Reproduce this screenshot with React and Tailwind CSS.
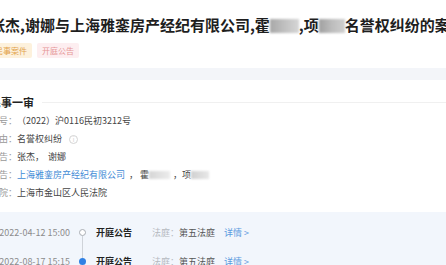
export default function App() {
  const rows = [
    { label: "案号：", value: <span className="text-[#444]">（2022）沪0116民初3212号</span> },
    {
      label: "案由：",
      value: (
        <span className="flex items-center text-[#444]">
          名誉权纠纷
          <span className="ml-[7px] w-[9px] h-[9px] rounded-full border border-[#d4d4d4] text-[#d0d0d0] text-[6px] leading-[7px] flex items-center justify-center">i</span>
        </span>
      ),
    },
    {
      label: "原告：",
      value: (
        <span className="text-[#444]">
          张杰，<span className="ml-[4px]">谢娜</span>
        </span>
      ),
    },
    {
      label: "被告：",
      value: (
        <span className="flex items-center text-[#444]">
          <span className="text-[#3f8bd6]">上海雅銮房产经纪有限公司</span>
          <span className="ml-[4px]">，</span>
          <span className="ml-[2px]">霍</span>
          <span className="w-[21px] h-[8px] bg-linear-to-r from-[#d6d6d6] to-[#ececec] blur-[1px]"></span>
          <span className="ml-[3px]">，</span>
          <span>项</span>
          <span className="w-[18px] h-[8px] bg-linear-to-r from-[#d0d0d0] to-[#e8e8e8] blur-[1px]"></span>
        </span>
      ),
    },
    { label: "法院：", value: <span className="text-[#444]">上海市金山区人民法院</span> },
  ];

  const events = [
    { date: "2022-04-12 15:00", active: false, first: true },
    { date: "2022-08-17 15:15", active: true, first: false },
  ];

  return (
    <div className="w-[446px] h-[265px] overflow-hidden bg-white font-['Noto_Sans_CJK_SC',sans-serif]">
      <div className="-ml-[10px] w-[470px]">
        <header className="pt-[15px] pb-[10px]">
          <h1 className="text-[15px] leading-[20px] font-bold text-[#1e1e1e] whitespace-nowrap">
            张杰,谢娜与上海雅銮房产经纪有限公司,霍
            <span className="inline-block align-[-2px] w-[29px] h-[14px] bg-linear-to-r from-[#a8a8a8] via-[#c0c0c0] to-[#d6d6d6] blur-[1px]"></span>
            ,项
            <span className="inline-block align-[-2px] w-[26px] h-[14px] bg-linear-to-r from-[#a0a0a0] via-[#bdbdbd] to-[#cfcfcf] blur-[1px]"></span>
            名誉权纠纷的案件
          </h1>
          <div className="mt-[8px] flex gap-[5px]">
            <span className="h-[15px] px-[5px] text-[8px] leading-[15px] rounded-[2px] bg-[#fdf1dc] text-[#e2a24a]">民事案件</span>
            <span className="h-[15px] px-[5px] text-[8px] leading-[15px] rounded-[2px] bg-[#fdeef0] text-[#e59595]">开庭公告</span>
          </div>
        </header>

        <div className="h-[12px] bg-[#f3f5f9]"></div>

        <section className="pt-[14px]">
          <div className="flex items-center">
            <h2 className="text-[11px] leading-[16px] font-bold text-[#222]">民事一审</h2>
            <div className="ml-[8px] flex-1 h-px bg-[#f0f0f0]"></div>
          </div>

          <div className="mt-[2px]">
            {rows.map((r) => (
              <div key={r.label} className="flex items-center text-[9px] leading-[18px] h-[18px]">
                <span className="w-[27px] text-[#999]">{r.label}</span>
                {r.value}
              </div>
            ))}
          </div>

          <div className="mt-[10px] bg-[#f2f6fc] pt-[6px] pb-[10px]">
            {events.map((e) => (
              <div key={e.date} className="flex items-center h-[29px] text-[9px] leading-[14px]">
                <span className="w-[80px] text-right text-[#8c8c8c] whitespace-nowrap">{e.date}</span>
                <div className="ml-[7px] w-[10px] self-stretch flex flex-col items-center">
                  <div className={`flex-1 w-px ${e.first ? "" : "bg-[#cfd3d9]"}`}></div>
                  {e.active ? (
                    <div className="w-[7px] h-[7px] rounded-full bg-[#2f80e4]"></div>
                  ) : (
                    <div className="w-[7px] h-[7px] rounded-full border border-[#a9adb3] bg-white"></div>
                  )}
                  <div className="flex-1 w-px bg-[#cfd3d9]"></div>
                </div>
                <span className="ml-[9px] font-bold text-[#222]">开庭公告</span>
                <span className="ml-[20px] text-[#b5b9bf]">法庭：</span>
                <span className="text-[#555]">第五法庭</span>
                <span className="ml-[9px] text-[#5b9be0]">详情 &gt;</span>
              </div>
            ))}
          </div>
        </section>
      </div>
    </div>
  );
}
